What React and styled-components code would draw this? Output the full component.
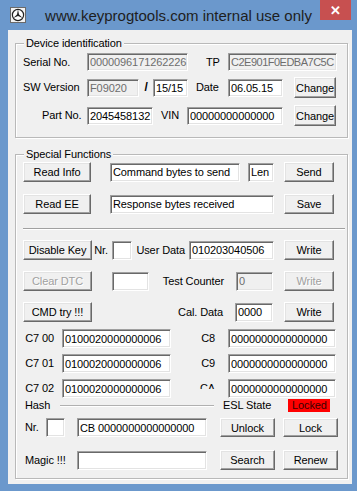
import React from 'react';
import styled, { createGlobalStyle } from 'styled-components';

const FONT = '"Liberation Sans", Arial, sans-serif';

const GlobalStyle = createGlobalStyle`
  html, body { margin: 0; padding: 0; background: #6b98cc; }
  body { font-family: ${FONT}; }
  * { box-sizing: border-box; }
`;

const Window = styled.div`
  width: 357px;
  height: 491px;
  background: #6b98cc;
  display: flex;
  flex-direction: column;
  overflow: hidden;
`;

const TitleBar = styled.div`
  height: 30px;
  flex: none;
  display: flex;
  align-items: flex-start;
`;

const AppIcon = styled.svg`
  flex: none;
  margin: 7px 0 0 10px;
`;

const Title = styled.div`
  flex: 1;
  text-align: center;
  padding: 7px 0 0 11px;
  font: 15px ${FONT};
  line-height: 17px;
  color: #1e1e1e;
  white-space: nowrap;
`;

const CloseButton = styled.div`
  flex: none;
  width: 31px;
  height: 20px;
  margin-right: 6px;
  background: #c75050;
  color: #fff;
  display: flex;
  align-items: center;
  justify-content: center;
  font: bold 13px ${FONT};
`;

const Client = styled.div`
  flex: none;
  height: 454px;
  margin: 0 5px 0 8px;
  padding: 6px 0 0 7px;
  background: #f0f0f0;
  font: 11px ${FONT};
  letter-spacing: -0.1px;
  color: #000;
`;

const Group = styled.fieldset`
  width: 333px;
  margin: ${(p) => p.$mt || 0}px 0 0 0;
  padding: 0 0 ${(p) => p.$pb || 0}px 0;
  min-width: 0;
  border: 1px solid #b9b9b9;
  box-shadow: inset 1px 1px 0 #fff, 1px 1px 0 #fff;
`;

const Legend = styled.legend`
  margin-left: 8px;
  padding: 0 2px;
  height: 15px;
  line-height: 15px;
  background: #f0f0f0;
`;

const Row = styled.div`
  display: flex;
  align-items: center;
  height: ${(p) => p.$h}px;
  margin-top: ${(p) => p.$mt || 0}px;
`;

const Label = styled.span`
  flex: none;
  margin-left: ${(p) => p.$ml || 0}px;
  width: ${(p) => p.$w}px;
  padding-right: ${(p) => p.$pr || 0}px;
  text-align: ${(p) => (p.$right ? 'right' : p.$center ? 'center' : 'left')};
  font-weight: ${(p) => (p.$bold ? 'bold' : 'normal')};
  font-size: ${(p) => (p.$bold ? '12px' : 'inherit')};
  line-height: 13px;
  white-space: nowrap;
`;

const ClippedLabel = styled(Label)`
  align-self: flex-start;
  height: 10px;
  line-height: 19px;
  overflow: hidden;
`;

const Edit = styled.input`
  flex: none;
  margin: 0 0 0 ${(p) => p.$ml || 0}px;
  width: ${(p) => p.$w}px;
  height: ${(p) => p.$h || 19}px;
  padding: 0 0 0 2px;
  font: inherit;
  letter-spacing: ${(p) => (p.$tight ? '-0.5px' : 'inherit')};
  color: ${(p) => (p.readOnly ? '#6d6d6d' : '#000')};
  background: ${(p) => (p.readOnly ? '#f0f0f0' : '#fff')};
  border: 1px solid;
  border-color: #a0a0a0 #fff #fff #a0a0a0;
  border-radius: 0;
  box-shadow: inset 1px 1px 0 #696969, inset -1px -1px 0 #e3e3e3;
  outline: none;
`;

const Btn = styled.button`
  flex: none;
  margin-left: ${(p) => p.$ml || 0}px;
  width: ${(p) => p.$w}px;
  height: ${(p) => p.$h || 20}px;
  padding: 0;
  font: inherit;
  letter-spacing: inherit;
  color: ${(p) => (p.disabled ? '#a0a0a0' : '#000')};
  text-shadow: ${(p) => (p.disabled ? '1px 1px 0 #fff' : 'none')};
  background: #f0f0f0;
  border: 1px solid;
  border-color: #fff #696969 #696969 #fff;
  border-radius: 0;
  box-shadow: inset -1px -1px 0 #a0a0a0, inset 1px 1px 0 #e3e3e3;
  white-space: nowrap;
`;

const Separator = styled.div`
  margin: 14px 0 0 7px;
  width: 322px;
  height: 2px;
  border-top: 1px solid #a0a0a0;
  border-bottom: 1px solid #fff;
`;

const HashLine = styled.div`
  flex: none;
  width: ${(p) => p.$w}px;
  height: 2px;
  border-top: 1px solid #b0b0b0;
  border-bottom: 1px solid #fff;
`;

const Indicator = styled.div`
  flex: none;
  width: ${(p) => p.$w}px;
  height: 13px;
  padding-left: 4px;
  line-height: 13px;
  background: #ff0000;
  color: #3a0000;
  white-space: nowrap;
  overflow: hidden;
`;

const ro = { readOnly: true };

function CRow({ mt, left, lval, right, rval, clip }) {
  const R = clip ? ClippedLabel : Label;
  return (
    <Row $h={19} $mt={mt}>
      <Label $right $w={46} $pr={8}>{left}</Label>
      <Edit $w={109} defaultValue={lval} />
      <R $right $w={57} $pr={13}>{right}</R>
      <Edit $w={108} defaultValue={rval} />
    </Row>
  );
}

export default function App() {
  return (
    <Window>
      <GlobalStyle />
      <TitleBar>
        <AppIcon width="16" height="16" viewBox="0 0 16 16">
          <rect x="0.5" y="0.5" width="15" height="15" fill="#f2f2f2" stroke="#6a6a6a" />
          <circle cx="8" cy="8" r="5.6" fill="#fff" stroke="#222" strokeWidth="1.2" />
          <path d="M8 2.6 L9 7.5 L12.7 10.9 L8 9 L3.3 10.9 L7 7.5 Z" fill="#222" />
        </AppIcon>
        <Title>www.keyprogtools.com internal use only</Title>
        <CloseButton>✕</CloseButton>
      </TitleBar>
      <Client>
        <Group $pb={11}>
          <Legend>Device identification</Legend>
          <Row $h={18} $mt={2}>
            <Label $ml={7} $w={64}>Serial No.</Label>
            <Edit {...ro} $w={101} $h={18} defaultValue="0000096171262226" />
            <Label $ml={18} $w={22}>TP</Label>
            <Edit {...ro} $tight $w={109} $h={18} defaultValue="C2E901F0EDBA7C5C" />
          </Row>
          <Row $h={21} $mt={6}>
            <Label $ml={7} $w={64}>SW Version</Label>
            <Edit {...ro} $w={52} $h={18} defaultValue="F09020" />
            <Label $w={14} $center $bold>/</Label>
            <Edit $w={35} $h={18} defaultValue="15/15" />
            <Label $ml={8} $w={32}>Date</Label>
            <Edit $w={55} $h={18} defaultValue="06.05.15" />
            <Btn $ml={11} $w={42} $h={21}>Change</Btn>
          </Row>
          <Row $h={21} $mt={7}>
            <Label $ml={26} $w={45}>Part No.</Label>
            <Edit $w={66} $h={18} defaultValue="2045458132" />
            <Label $ml={8} $w={26}>VIN</Label>
            <Edit $w={96} $h={18} defaultValue="00000000000000" />
            <Btn $ml={11} $w={42} $h={21}>Change</Btn>
          </Row>
        </Group>

        <Group $mt={9} $pb={8}>
          <Legend>Special Functions</Legend>
          <Row $h={20}>
            <Btn $ml={7} $w={68}>Read Info</Btn>
            <Edit $ml={19} $w={130} defaultValue="Command bytes to send" />
            <Edit $ml={8} $w={26} defaultValue="Len" />
            <Btn $ml={10} $w={50}>Send</Btn>
          </Row>
          <Row $h={20} $mt={12}>
            <Btn $ml={7} $w={68}>Read EE</Btn>
            <Edit $ml={19} $w={164} defaultValue="Response bytes received" />
            <Btn $ml={10} $w={50}>Save</Btn>
          </Row>
          <Separator />
          <Row $h={20} $mt={10}>
            <Btn $ml={7} $w={69}>Disable Key</Btn>
            <Label $right $w={20} $pr={4}>Nr.</Label>
            <Edit $w={20} defaultValue="" />
            <Label $right $w={57} $pr={4}>User Data</Label>
            <Edit $w={85} defaultValue="010203040506" />
            <Btn $ml={10} $w={50}>Write</Btn>
          </Row>
          <Row $h={20} $mt={11}>
            <Btn $ml={7} $w={69} disabled>Clear DTC</Btn>
            <Edit $ml={20} $w={37} defaultValue="" />
            <Label $right $w={87} $pr={12}>Test Counter</Label>
            <Edit {...ro} $w={37} defaultValue="0" />
            <Btn $ml={11} $w={50} disabled>Write</Btn>
          </Row>
          <Row $h={20} $mt={11}>
            <Btn $ml={7} $w={69}>CMD try !!!</Btn>
            <Label $right $w={143} $pr={12}>Cal. Data</Label>
            <Edit $w={38} defaultValue="0000" />
            <Btn $ml={11} $w={50}>Write</Btn>
          </Row>
          <CRow mt={7} left="C7 00" lval="0100020000000006" right="C8" rval="0000000000000000" />
          <CRow mt={6} left="C7 01" lval="0100020000000006" right="C9" rval="0000000000000000" />
          <CRow mt={6} left="C7 02" lval="0100020000000006" right="CA" rval="0000000000000000" clip />
          <Row $h={13} $mt={1}>
            <Label $ml={9} $w={35}>Hash</Label>
            <HashLine $w={154} />
            <Label $ml={9} $w={65}>ESL State</Label>
            <Indicator $w={42}>Locked</Indicator>
          </Row>
          <Row $h={19} $mt={6}>
            <Label $ml={9} $w={21}>Nr.</Label>
            <Edit $w={19} defaultValue="" />
            <Edit $ml={12} $w={130} defaultValue="CB 0000000000000000" />
            <Btn $ml={13} $w={55} $h={19}>Unlock</Btn>
            <Btn $ml={8} $w={55} $h={19}>Lock</Btn>
          </Row>
          <Row $h={20} $mt={13}>
            <Label $ml={9} $w={52}>Magic !!!</Label>
            <Edit $w={130} defaultValue="" />
            <Btn $ml={13} $w={55}>Search</Btn>
            <Btn $ml={8} $w={55}>Renew</Btn>
          </Row>
        </Group>
      </Client>
    </Window>
  );
}
